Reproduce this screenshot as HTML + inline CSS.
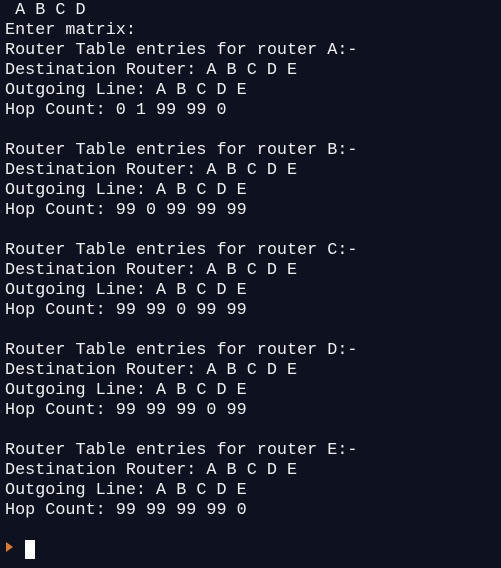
<!DOCTYPE html>
<html><head><style>
html,body{margin:0;padding:0;background:#0d1120;width:501px;height:568px;overflow:hidden}
pre{margin:0;position:absolute;left:5px;top:1px;font-family:"Liberation Mono",monospace;font-size:16.8px;line-height:20px;color:#f0f0f0}
.p{position:absolute;left:6px;top:542px;width:0;height:0;border-top:5px solid transparent;border-bottom:5px solid transparent;border-left:7px solid #e07a2a}
.c{position:absolute;left:25px;top:540px;width:10px;height:19px;background:#fff}
</style></head><body>
<pre> A B C D
Enter matrix:
Router Table entries for router A:-
Destination Router: A B C D E
Outgoing Line: A B C D E
Hop Count: 0 1 99 99 0

Router Table entries for router B:-
Destination Router: A B C D E
Outgoing Line: A B C D E
Hop Count: 99 0 99 99 99

Router Table entries for router C:-
Destination Router: A B C D E
Outgoing Line: A B C D E
Hop Count: 99 99 0 99 99

Router Table entries for router D:-
Destination Router: A B C D E
Outgoing Line: A B C D E
Hop Count: 99 99 99 0 99

Router Table entries for router E:-
Destination Router: A B C D E
Outgoing Line: A B C D E
Hop Count: 99 99 99 99 0</pre>
<div class="p"></div><div class="c"></div>
</body></html>
